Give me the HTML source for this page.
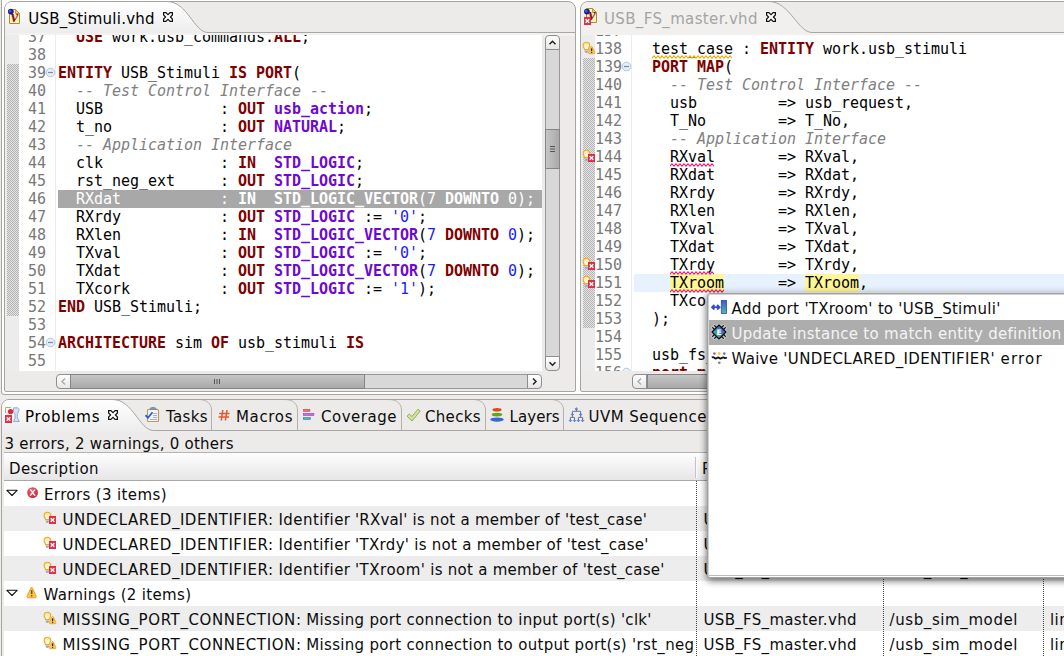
<!DOCTYPE html>
<html>
<head>
<meta charset="utf-8">
<title>Eclipse quick fix</title>
<style>
html,body{margin:0;padding:0;}
body{width:1064px;height:656px;overflow:hidden;background:#edeceb;position:relative;font-family:"DejaVu Sans","Liberation Sans",sans-serif;font-size:15px;color:#1a1a1a;}
.abs{position:absolute;}
.ui{position:absolute;font-family:"DejaVu Sans","Liberation Sans",sans-serif;font-size:15px;line-height:20px;height:20px;white-space:pre;color:#0c0c0c;}
.code{font-family:"DejaVu Sans Mono","Liberation Mono",monospace;font-size:15px;line-height:18px;color:#000;letter-spacing:-0.031px;}
.code div{height:18px;white-space:pre;}
.k{color:#800000;font-weight:bold;}
.t{color:#6e08d2;font-weight:bold;}
.c{color:#808080;font-style:italic;}
.n{color:#1a1aff;}
.b{font-weight:bold;}
.ln{font-family:"DejaVu Sans Mono","Liberation Mono",monospace;font-size:15px;line-height:18px;color:#787878;text-align:right;letter-spacing:-0.031px;}
.ln div{height:18px;}
.hatch{background-image:repeating-conic-gradient(#b4b4b4 0% 25%, #e4e4e4 0% 50%);background-size:2px 2px;}
.hl{background:#fff697;}
.sbtn{position:absolute;box-sizing:border-box;border:1px solid #8e8e8e;background:linear-gradient(#ffffff,#e6e6e6);}
.strack{position:absolute;box-sizing:border-box;border:1px solid #999;background:#d8d8d8;}
.sthumb{position:absolute;box-sizing:border-box;border:1px solid #858585;}
.g{background:#ededed;}
</style>
</head>
<body>
<svg width="0" height="0" style="position:absolute;left:0;top:0"><defs><radialGradient id="eg" cx="0.4" cy="0.3" r="0.8"><stop offset="0" stop-color="#f06070"/><stop offset="1" stop-color="#d01c30"/></radialGradient><radialGradient id="bg" cx="0.5" cy="0.75" r="0.7"><stop offset="0" stop-color="#ffffff"/><stop offset="1" stop-color="#fbe08a"/></radialGradient><linearGradient id="apg" x1="0" y1="0" x2="0" y2="1"><stop offset="0" stop-color="#3858d8"/><stop offset="1" stop-color="#58b8a0"/></linearGradient><linearGradient id="upg" x1="1" y1="0" x2="0" y2="1"><stop offset="0.2" stop-color="#3a58cc"/><stop offset="0.8" stop-color="#48b4b4"/></linearGradient><linearGradient id="tg" x1="0" y1="0" x2="0" y2="1"><stop offset="0" stop-color="#ffffff"/><stop offset="1" stop-color="#ebebeb"/></linearGradient></defs></svg>
<div class="abs" style="left:1px;top:-3px;width:1080px;height:398px;border:1px solid #a8a4a0;border-radius:3px;box-sizing:border-box;background:#fff;"></div>
<!-- LEFT EDITOR -->
<div class="abs" style="left:4px;top:1px;width:572px;height:391px;border:1px solid #a8a4a0;border-radius:8px 8px 2px 2px;background:#ecebea;box-sizing:border-box;overflow:hidden;"><svg class="abs" style="left:0;top:0" width="572" height="34" viewBox="0 0 572 34"><path d="M0 0H162C182.5 -0.5 189 31 203 31H572V34H0Z" fill="url(#tg)"/><path d="M162 -0.5C182.5 -0.5 189 30.5 203 30.5H572" fill="none" stroke="#aaa6a2" stroke-width="1"/><rect x="0" y="31" width="572" height="3" fill="#f2f1f0"/></svg></div><svg class="abs" style="left:8px;top:8px;" width="14" height="17" viewBox="0 0 14 17"><path d="M1.5 1.5H7.5L11.5 5.5V15.5H1.5Z" fill="#fdf1c3" stroke="#b48a2c" stroke-width="1"/><path d="M7.5 1.5V5.5H11.5Z" fill="#e9c878" stroke="#b48a2c" stroke-width="0.8"/><text x="6.5" y="14.2" font-family="Liberation Serif,serif" font-style="italic" font-weight="bold" font-size="16" fill="#8c1414" text-anchor="middle">v</text><circle cx="2.8" cy="3.6" r="2.9" fill="#141c8c"/><circle cx="2.1" cy="3.2" r="1.4" fill="#5870c0" opacity="0.75"/></svg><div class="ui" style="left:28.3px;top:8.5px;color:#000;letter-spacing:0.229px;">USB_Stimuli.vhd</div><svg class="abs" style="left:163px;top:12px;" width="10" height="10" viewBox="0 0 10 10"><path d="M0.6 0.6H2.9L5 2.6L7.1 0.6H9.4V2.9L7.4 5L9.4 7.1V9.4H7.1L5 7.4L2.9 9.4H0.6V7.1L2.6 5L0.6 2.9Z" fill="#fff" stroke="#111" stroke-width="1.2" stroke-linejoin="miter"/></svg><div class="abs" style="left:5px;top:35px;width:537px;height:336px;background:#fff;overflow:hidden;"><div class="abs" style="left:0;top:0;width:14px;height:336px;background:#ececec;"></div><div class="abs hatch" style="left:2px;top:29px;width:12px;height:252px;"></div><div class="abs ln" style="left:13px;top:-7px;width:28px;"><div>37</div><div>38</div><div>39</div><div>40</div><div>41</div><div>42</div><div>43</div><div>44</div><div>45</div><div>46</div><div>47</div><div>48</div><div>49</div><div>50</div><div>51</div><div>52</div><div>53</div><div>54</div><div>55</div></div><div class="abs" style="left:50px;top:0;width:1px;height:336px;background:#ececec;"></div><div class="abs" style="left:53px;top:155px;width:484px;height:18px;background:#a8a8a8;"></div><div class="abs code" style="left:53px;top:-7px;"><div>  <span class="k">USE</span> work.usb_commands.<span class="k">ALL</span>;</div><div> </div><div><span class="k">ENTITY</span> USB_Stimuli <span class="k">IS</span> <span class="k">PORT</span>(</div><div>  <span class="c">-- Test Control Interface --</span></div><div>  USB             : <span class="k">OUT</span> <span class="t">usb_action</span>;</div><div>  t_no            : <span class="k">OUT</span> <span class="t">NATURAL</span>;</div><div>  <span class="c">-- Application Interface</span></div><div>  clk             : <span class="k">IN</span>  <span class="t">STD_LOGIC</span>;</div><div>  rst_neg_ext     : <span class="k">OUT</span> <span class="t">STD_LOGIC</span>;</div><div style="color:#fff">  RXdat           : <span class="b">IN</span>  <span class="b">STD_LOGIC_VECTOR</span>(7 <span class="b">DOWNTO</span> 0);</div><div>  RXrdy           : <span class="k">OUT</span> <span class="t">STD_LOGIC</span> := <span class="n">'0'</span>;</div><div>  RXlen           : <span class="k">IN</span>  <span class="t">STD_LOGIC_VECTOR</span>(<span class="n">7</span> <span class="k">DOWNTO</span> <span class="n">0</span>);</div><div>  TXval           : <span class="k">OUT</span> <span class="t">STD_LOGIC</span> := <span class="n">'0'</span>;</div><div>  TXdat           : <span class="k">OUT</span> <span class="t">STD_LOGIC_VECTOR</span>(<span class="n">7</span> <span class="k">DOWNTO</span> <span class="n">0</span>);</div><div>  TXcork          : <span class="k">OUT</span> <span class="t">STD_LOGIC</span> := <span class="n">'1'</span>);</div><div><span class="k">END</span> USB_Stimuli;</div><div> </div><div><span class="k">ARCHITECTURE</span> sim <span class="k">OF</span> usb_stimuli <span class="k">IS</span></div><div> </div></div><svg class="abs" style="left:39.5px;top:31.5px" width="11" height="11" viewBox="0 0 11 11"><circle cx="5.5" cy="5.5" r="4.3" fill="#e6eef7" stroke="#b4c6dc" stroke-width="1"/><path d="M3 5.5h5" stroke="#6f8fb8" stroke-width="1.2"/></svg><svg class="abs" style="left:39.5px;top:301.5px" width="11" height="11" viewBox="0 0 11 11"><circle cx="5.5" cy="5.5" r="4.3" fill="#e6eef7" stroke="#b4c6dc" stroke-width="1"/><path d="M3 5.5h5" stroke="#6f8fb8" stroke-width="1.2"/></svg></div><div class="abs" style="left:545px;top:35px;width:15px;height:336px;"><div class="strack" style="left:0;top:7px;width:15px;height:322px;"></div><div class="sbtn" style="left:0;top:0;width:15px;height:15px;border-radius:4px 4px 0 0;"></div><svg class="abs" style="left:0;top:0" width="15" height="15"><path d="M4.5 9.2L7.5 6.2L10.5 9.2" fill="none" stroke="#222" stroke-width="1.5"/></svg><div class="sbtn" style="left:0;top:321px;width:15px;height:15px;border-radius:0 0 4px 4px;"></div><svg class="abs" style="left:0;top:321px" width="15" height="15"><path d="M4.5 6.2L7.5 9.2L10.5 6.2" fill="none" stroke="#222" stroke-width="1.5"/></svg><div class="sthumb" style="left:0;top:94px;width:15px;height:40px;background:linear-gradient(90deg,#c6c6c6,#a9a9a9);"></div><svg class="abs" style="left:0;top:110.0px" width="15" height="8"><path d="M5 1.5h5M5 4h5M5 6.5h5" stroke="#555" stroke-width="1"/></svg></div><div class="abs" style="left:56px;top:374px;width:486px;height:15px;"><div class="strack" style="left:7px;top:0;width:472px;height:15px;"></div><div class="sbtn" style="left:0;top:0;width:15px;height:15px;border-radius:4px 0 0 4px;"></div><svg class="abs" style="left:0;top:0" width="15" height="15"><path d="M9 4.5L6 7.5L9 10.5" fill="none" stroke="#aaa" stroke-width="1.4"/></svg><div class="sbtn" style="left:471px;top:0;width:15px;height:15px;border-radius:0 4px 4px 0;"></div><svg class="abs" style="left:471px;top:0" width="15" height="15"><path d="M6 4.5L9 7.5L6 10.5" fill="none" stroke="#222" stroke-width="1.5"/></svg><div class="sthumb" style="left:14px;top:0;width:294.5px;height:15px;background:linear-gradient(#c6c6c6,#a9a9a9);"></div><svg class="abs" style="left:157.25px;top:0" width="8" height="15"><path d="M1.5 5v5M4 5v5M6.5 5v5" stroke="#555" stroke-width="1"/></svg></div>
<!-- RIGHT EDITOR -->
<div class="abs" style="left:580px;top:1px;width:500px;height:391px;border:1px solid #a8a4a0;border-radius:8px 0 0 2px;background:#ecebea;box-sizing:border-box;overflow:hidden;"><svg class="abs" style="left:0;top:0" width="500" height="34" viewBox="0 0 500 34"><path d="M0 0H188C208.5 -0.5 217 31 231 31H500V34H0Z" fill="#f1f0ef"/><path d="M188 -0.5C208.5 -0.5 217 30.5 231 30.5H500" fill="none" stroke="#aaa6a2" stroke-width="1"/><rect x="0" y="31" width="500" height="3" fill="#f2f1f0"/></svg></div><svg class="abs" style="left:584px;top:7px;" width="14" height="19" viewBox="0 0 14 19"><path d="M2.5 1.5H8.5L12.5 5.5V15.5H2.5Z" fill="#fdf1c3" stroke="#b48a2c" stroke-width="1"/><path d="M8.5 1.5V5.5H12.5Z" fill="#e9c878" stroke="#b48a2c" stroke-width="0.8"/><text x="8" y="13.2" font-family="Liberation Serif,serif" font-style="italic" font-weight="bold" font-size="16" fill="#8c1414" text-anchor="middle">v</text><circle cx="2.9" cy="4.6" r="2.9" fill="#141c8c"/><circle cx="2.2" cy="4.2" r="1.4" fill="#5870c0" opacity="0.75"/><rect x="-0.2" y="10" width="7.2" height="8" fill="#dc3048"/><path d="M1.5999999999999999 12.2L5.2 15.8M5.2 12.2L1.5999999999999999 15.8" stroke="#fff" stroke-width="1.4"/></svg><div class="ui" style="left:604px;top:8.5px;color:#a4a4a4;letter-spacing:0.352px;">USB_FS_master.vhd</div><svg class="abs" style="left:765.5px;top:12px;" width="10" height="10" viewBox="0 0 10 10"><path d="M0.6 0.6H2.9L5 2.6L7.1 0.6H9.4V2.9L7.4 5L9.4 7.1V9.4H7.1L5 7.4L2.9 9.4H0.6V7.1L2.6 5L0.6 2.9Z" fill="#fff" stroke="#111" stroke-width="1.2" stroke-linejoin="miter"/></svg><div class="abs" style="left:581px;top:35px;width:483px;height:336px;background:#fff;overflow:hidden;"><div class="abs" style="left:0;top:0;width:14px;height:336px;background:#ececec;"></div><div class="abs hatch" style="left:2px;top:23px;width:12px;height:270px;"></div><div class="abs ln" style="left:14px;top:-13px;width:27px;"><div>137</div><div>138</div><div>139</div><div>140</div><div>141</div><div>142</div><div>143</div><div>144</div><div>145</div><div>146</div><div>147</div><div>148</div><div>149</div><div>150</div><div>151</div><div>152</div><div>153</div><div>154</div><div>155</div><div>156</div></div><div class="abs" style="left:50px;top:0;width:1px;height:336px;background:#ececec;"></div><div class="abs" style="left:53px;top:239px;width:430px;height:18px;background:#e8f2fe;"></div><div class="abs code" style="left:53px;top:-13px;"><div> </div><div>  test_case : <span class="k">ENTITY</span> work.usb_stimuli</div><div>  <span class="k">PORT</span> <span class="k">MAP</span>(</div><div>    <span class="c">-- Test Control Interface --</span></div><div>    usb         =&gt; usb_request,</div><div>    T_No        =&gt; T_No,</div><div>    <span class="c">-- Application Interface</span></div><div>    RXval       =&gt; RXval,</div><div>    RXdat       =&gt; RXdat,</div><div>    RXrdy       =&gt; RXrdy,</div><div>    RXlen       =&gt; RXlen,</div><div>    TXval       =&gt; TXval,</div><div>    TXdat       =&gt; TXdat,</div><div>    TXrdy       =&gt; TXrdy,</div><div>    <span class="hl">TXroom</span>      =&gt; <span class="hl">TXroom</span>,</div><div>    TXcork      =&gt; TXcork</div><div>  );</div><div> </div><div>  usb_fs_master : <span class="k">ENTITY</span> work.usb_fs_master</div><div>  <span class="k">port</span> <span class="k">map</span>(</div></div><svg class="abs" style="left:40.0px;top:25.5px" width="11" height="11" viewBox="0 0 11 11"><circle cx="5.5" cy="5.5" r="4.3" fill="#e6eef7" stroke="#b4c6dc" stroke-width="1"/><path d="M3 5.5h5" stroke="#6f8fb8" stroke-width="1.2"/></svg><svg class="abs" style="left:40.0px;top:331.5px" width="11" height="11" viewBox="0 0 11 11"><circle cx="5.5" cy="5.5" r="4.3" fill="#e6eef7" stroke="#b4c6dc" stroke-width="1"/><path d="M3 5.5h5" stroke="#6f8fb8" stroke-width="1.2"/></svg><svg class="abs" style="left:1px;top:5.7px;" width="14" height="14" viewBox="0 0 14 14"><path d="M2.6 8.6H6.2V10.6C6.2 12.2 2.6 12.2 2.6 10.6Z" fill="#c4d0de"/><path d="M2.8 10.4C3.4 12 5.4 12 6 10.4Z" fill="#6a86ac"/><path d="M4.4 1.2C6.4 1.2 7.7 2.6 7.7 4.4C7.7 6 6.6 6.8 6.2 8.6H2.6C2.2 6.8 1.1 6 1.1 4.4C1.1 2.6 2.4 1.2 4.4 1.2Z" fill="url(#bg)" stroke="#f0aa28" stroke-width="1.1"/><path d="M9 5.9C9.3 5.3 9.9 5.3 10.2 5.9L12.8 11.4C13.1 12.2 12.7 12.7 12 12.7H7.2C6.5 12.7 6.1 12.2 6.4 11.4Z" fill="#fad060" stroke="#e8a020" stroke-width="0.9" stroke-linejoin="round"/><path d="M9.6 7.4V10" stroke="#3a2408" stroke-width="1.3"/><rect x="8.95" y="10.7" width="1.3" height="1.2" fill="#3a2408"/></svg><svg class="abs" style="left:1px;top:113.7px;" width="14" height="14" viewBox="0 0 14 14"><path d="M2.6 8.6H6.2V10.6C6.2 12.2 2.6 12.2 2.6 10.6Z" fill="#c4d0de"/><path d="M2.8 10.4C3.4 12 5.4 12 6 10.4Z" fill="#6a86ac"/><path d="M4.4 1.2C6.4 1.2 7.7 2.6 7.7 4.4C7.7 6 6.6 6.8 6.2 8.6H2.6C2.2 6.8 1.1 6 1.1 4.4C1.1 2.6 2.4 1.2 4.4 1.2Z" fill="url(#bg)" stroke="#f0aa28" stroke-width="1.1"/><rect x="6" y="5" width="7" height="8" fill="#dc3048"/><path d="M7.7 7.2L11.3 10.8M11.3 7.2L7.7 10.8" stroke="#fff" stroke-width="1.4"/></svg><svg class="abs" style="left:1px;top:221.7px;" width="14" height="14" viewBox="0 0 14 14"><path d="M2.6 8.6H6.2V10.6C6.2 12.2 2.6 12.2 2.6 10.6Z" fill="#c4d0de"/><path d="M2.8 10.4C3.4 12 5.4 12 6 10.4Z" fill="#6a86ac"/><path d="M4.4 1.2C6.4 1.2 7.7 2.6 7.7 4.4C7.7 6 6.6 6.8 6.2 8.6H2.6C2.2 6.8 1.1 6 1.1 4.4C1.1 2.6 2.4 1.2 4.4 1.2Z" fill="url(#bg)" stroke="#f0aa28" stroke-width="1.1"/><rect x="6" y="5" width="7" height="8" fill="#dc3048"/><path d="M7.7 7.2L11.3 10.8M11.3 7.2L7.7 10.8" stroke="#fff" stroke-width="1.4"/></svg><svg class="abs" style="left:1px;top:239.7px;" width="14" height="14" viewBox="0 0 14 14"><path d="M2.6 8.6H6.2V10.6C6.2 12.2 2.6 12.2 2.6 10.6Z" fill="#c4d0de"/><path d="M2.8 10.4C3.4 12 5.4 12 6 10.4Z" fill="#6a86ac"/><path d="M4.4 1.2C6.4 1.2 7.7 2.6 7.7 4.4C7.7 6 6.6 6.8 6.2 8.6H2.6C2.2 6.8 1.1 6 1.1 4.4C1.1 2.6 2.4 1.2 4.4 1.2Z" fill="url(#bg)" stroke="#f0aa28" stroke-width="1.1"/><rect x="6" y="5" width="7" height="8" fill="#dc3048"/><path d="M7.7 7.2L11.3 10.8M11.3 7.2L7.7 10.8" stroke="#fff" stroke-width="1.4"/></svg><svg class="abs" style="left:71px;top:19.7px" width="81" height="4" viewBox="0 0 81 4"><path d="M0 3.15L2 0.85L4 3.15L6 0.85L8 3.15L10 0.85L12 3.15L14 0.85L16 3.15L18 0.85L20 3.15L22 0.85L24 3.15L26 0.85L28 3.15L30 0.85L32 3.15L34 0.85L36 3.15L38 0.85L40 3.15L42 0.85L44 3.15L46 0.85L48 3.15L50 0.85L52 3.15L54 0.85L56 3.15L58 0.85L60 3.15L62 0.85L64 3.15L66 0.85L68 3.15L70 0.85L72 3.15L74 0.85L76 3.15L78 0.85L80 3.15" fill="none" stroke="#e6b000" stroke-width="1.1"/></svg><svg class="abs" style="left:89px;top:127.69999999999999px" width="45" height="4" viewBox="0 0 45 4"><path d="M0 3.15L2 0.85L4 3.15L6 0.85L8 3.15L10 0.85L12 3.15L14 0.85L16 3.15L18 0.85L20 3.15L22 0.85L24 3.15L26 0.85L28 3.15L30 0.85L32 3.15L34 0.85L36 3.15L38 0.85L40 3.15L42 0.85L44 3.15" fill="none" stroke="#ee1c7c" stroke-width="1.1"/></svg><svg class="abs" style="left:89px;top:235.7px" width="45" height="4" viewBox="0 0 45 4"><path d="M0 3.15L2 0.85L4 3.15L6 0.85L8 3.15L10 0.85L12 3.15L14 0.85L16 3.15L18 0.85L20 3.15L22 0.85L24 3.15L26 0.85L28 3.15L30 0.85L32 3.15L34 0.85L36 3.15L38 0.85L40 3.15L42 0.85L44 3.15" fill="none" stroke="#ee1c7c" stroke-width="1.1"/></svg><svg class="abs" style="left:89px;top:253.7px" width="54" height="4" viewBox="0 0 54 4"><path d="M0 3.15L2 0.85L4 3.15L6 0.85L8 3.15L10 0.85L12 3.15L14 0.85L16 3.15L18 0.85L20 3.15L22 0.85L24 3.15L26 0.85L28 3.15L30 0.85L32 3.15L34 0.85L36 3.15L38 0.85L40 3.15L42 0.85L44 3.15L46 0.85L48 3.15L50 0.85L52 3.15L54 0.85" fill="none" stroke="#ee1c7c" stroke-width="1.1"/></svg></div><div class="abs" style="left:632px;top:374px;width:568px;height:15px;"><div class="strack" style="left:7px;top:0;width:554px;height:15px;"></div><div class="sbtn" style="left:0;top:0;width:15px;height:15px;border-radius:4px 0 0 4px;"></div><svg class="abs" style="left:0;top:0" width="15" height="15"><path d="M9 4.5L6 7.5L9 10.5" fill="none" stroke="#aaa" stroke-width="1.4"/></svg><div class="sbtn" style="left:553px;top:0;width:15px;height:15px;border-radius:0 4px 4px 0;"></div><svg class="abs" style="left:553px;top:0" width="15" height="15"><path d="M6 4.5L9 7.5L6 10.5" fill="none" stroke="#222" stroke-width="1.5"/></svg><div class="sthumb" style="left:15px;top:0;width:503px;height:15px;background:linear-gradient(#c6c6c6,#a9a9a9);"></div><svg class="abs" style="left:262.5px;top:0" width="8" height="15"><path d="M1.5 5v5M4 5v5M6.5 5v5" stroke="#555" stroke-width="1"/></svg></div>
<!-- BOTTOM PANEL -->
<div class="abs" style="left:1px;top:399px;width:1080px;height:270px;border:1px solid #a8a4a0;border-radius:8px 0 0 0;background:#ecebea;box-sizing:border-box;overflow:hidden;"><svg class="abs" style="left:0;top:0" width="1064" height="34" viewBox="0 0 1064 34"><path d="M0 0H110.5C131.0 -0.5 137.5 31 151.5 31H1064V34H0Z" fill="url(#tg)"/><path d="M110.5 -0.5C131.0 -0.5 137.5 30.5 151.5 30.5H1064" fill="none" stroke="#aaa6a2" stroke-width="1"/><path d="M197 -0.5C205 -0.5 209.5 4 209.5 10V30.5" fill="none" stroke="#b4b0ac" stroke-width="1"/><path d="M283 -0.5C291 -0.5 295.5 4 295.5 10V30.5" fill="none" stroke="#b4b0ac" stroke-width="1"/><path d="M387 -0.5C395 -0.5 399.5 4 399.5 10V30.5" fill="none" stroke="#b4b0ac" stroke-width="1"/><path d="M471 -0.5C479 -0.5 483.5 4 483.5 10V30.5" fill="none" stroke="#b4b0ac" stroke-width="1"/><path d="M549 -0.5C557 -0.5 561.5 4 561.5 10V30.5" fill="none" stroke="#b4b0ac" stroke-width="1"/></svg></div><svg class="abs" style="left:5px;top:407px;" width="15" height="17" viewBox="0 0 15 17"><path d="M0.5 6V0.5H6" fill="none" stroke="#b8b070" stroke-width="1"/><circle cx="5.6" cy="4.6" r="2.7" fill="#e02838"/><path d="M8.5 0.8H12.5C14.2 0.8 14.4 3.5 13.2 5.2C12.2 6.6 12 9 12.6 11.5L14.3 14.5H8.5L10 11.5V6.5L8.5 5.2Z" fill="#d4e2f6" stroke="#8da4cc" stroke-width="0.9"/><rect x="0" y="8" width="7" height="8" fill="#dc3048"/><path d="M1.7 10.2L5.3 13.8M5.3 10.2L1.7 13.8" stroke="#fff" stroke-width="1.4"/></svg><div class="ui" style="left:25px;top:407.0px;color:#000;letter-spacing:0.766px;">Problems</div><svg class="abs" style="left:107.5px;top:410px;" width="10" height="10" viewBox="0 0 10 10"><path d="M0.6 0.6H2.9L5 2.6L7.1 0.6H9.4V2.9L7.4 5L9.4 7.1V9.4H7.1L5 7.4L2.9 9.4H0.6V7.1L2.6 5L0.6 2.9Z" fill="#fff" stroke="#111" stroke-width="1.2" stroke-linejoin="miter"/></svg><svg class="abs" style="left:145px;top:407px;" width="15" height="16" viewBox="0 0 15 16"><rect x="2.5" y="2.5" width="11" height="12" rx="1" fill="#f4f4f8" stroke="#c09a58" stroke-width="1.2"/><path d="M5 2.5V1H6.5L7 0H9L9.5 1H11V2.5Z" fill="#8898b8" stroke="#7080a0" stroke-width="0.6"/><path d="M8 6.5h4M8 8.5h4M8 10.5h4M5 12.5h7" stroke="#9aa8c8" stroke-width="0.9"/><path d="M0.5 8.2L3 10.8L7.5 5.2" fill="none" stroke="#1c5cd0" stroke-width="1.7"/></svg><div class="ui" style="left:166px;top:407.0px;letter-spacing:0.324px;">Tasks</div><svg class="abs" style="left:218px;top:409px;" width="13" height="13" viewBox="0 0 13 13"><path d="M4.8 1L3.2 11.5M9 1L7.4 11.5M1.2 4.4H11.6M0.6 8.1H11" stroke="#e05a2c" stroke-width="1.5" fill="none"/></svg><div class="ui" style="left:236px;top:407.0px;letter-spacing:0.656px;">Macros</div><svg class="abs" style="left:303px;top:408px;" width="12" height="13" viewBox="0 0 12 13"><rect x="0.3" y="1.3" width="6.6" height="2" fill="#ee6878" stroke="#c84858" stroke-width="0.6"/><rect x="0.3" y="5.3" width="10.6" height="2.2" fill="#c070d8" stroke="#9848b0" stroke-width="0.6"/><rect x="0.3" y="9.5" width="7.2" height="2" fill="#50b0c8" stroke="#3088a8" stroke-width="0.6"/></svg><div class="ui" style="left:321px;top:407.0px;letter-spacing:0.518px;">Coverage</div><svg class="abs" style="left:406px;top:408px;" width="15" height="14" viewBox="0 0 15 14"><path d="M1 8.2L3.4 6L5.8 8.6L12 1.2L14.3 3L6 13Z" fill="#d2e2a0" stroke="#94b050" stroke-width="1" stroke-linejoin="round"/></svg><div class="ui" style="left:425px;top:407.0px;letter-spacing:0.306px;">Checks</div><svg class="abs" style="left:490px;top:408px;" width="14" height="14" viewBox="0 0 14 14"><ellipse cx="7" cy="1.8" rx="4.6" ry="1.8" fill="#e04818"/><ellipse cx="7" cy="6.6" rx="5.3" ry="1.9" fill="#5ca820"/><ellipse cx="7" cy="11.6" rx="6.8" ry="2.1" fill="#3a66d0"/></svg><div class="ui" style="left:509.5px;top:407.0px;letter-spacing:0.072px;">Layers</div><svg class="abs" style="left:568px;top:407px;" width="17" height="16" viewBox="0 0 17 16"><path d="M8.4 2V4.3M4.4 7V4.3H12.6V7M4.4 8V10.4M12.6 8V10.4M2.4 13V10.4H6.5V13M10.4 13V10.4H14.6V13" stroke="#6c7688" stroke-width="1" fill="none"/><path d="M8.4 0.75L9.55 1.9L8.4 3.05L7.25 1.9Z" fill="#48a0c8" stroke="#4460d8" stroke-width="0.8"/><path d="M4.4 6.35L5.550000000000001 7.5L4.4 8.65L3.2500000000000004 7.5Z" fill="#48a0c8" stroke="#4460d8" stroke-width="0.8"/><path d="M12.6 6.35L13.75 7.5L12.6 8.65L11.45 7.5Z" fill="#48a0c8" stroke="#4460d8" stroke-width="0.8"/><path d="M2.4 12.45L3.55 13.6L2.4 14.75L1.25 13.6Z" fill="#48a0c8" stroke="#4460d8" stroke-width="0.8"/><path d="M6.5 12.45L7.65 13.6L6.5 14.75L5.35 13.6Z" fill="#48a0c8" stroke="#4460d8" stroke-width="0.8"/><path d="M10.4 12.45L11.55 13.6L10.4 14.75L9.25 13.6Z" fill="#48a0c8" stroke="#4460d8" stroke-width="0.8"/><path d="M14.6 12.45L15.75 13.6L14.6 14.75L13.45 13.6Z" fill="#48a0c8" stroke="#4460d8" stroke-width="0.8"/></svg><div class="ui" style="left:588.5px;top:407.0px;letter-spacing:0.45px;">UVM Sequence</div><div class="ui" style="left:4.5px;top:434.0px;letter-spacing:0.248px;">3 errors, 2 warnings, 0 others</div><div class="abs" style="left:4px;top:452px;width:1060px;height:204px;background:#fff;"></div><div class="abs" style="left:4px;top:452px;width:1060px;height:29px;background:linear-gradient(#fefefe,#e6e6e6);border-top:1px solid #b4b4b4;border-bottom:1px solid #a8a8a8;box-sizing:border-box;"></div><div class="ui" style="left:9px;top:459.0px;letter-spacing:0.406px;">Description</div><div class="ui" style="left:702px;top:459.0px;letter-spacing:0.3px;">Resource</div><div class="abs g" style="left:4px;top:506px;width:1060px;height:25px;"></div><div class="abs g" style="left:4px;top:556px;width:1060px;height:25px;"></div><div class="abs g" style="left:4px;top:606px;width:1060px;height:25px;"></div><div class="abs" style="left:695px;top:457px;width:1px;height:21px;background:#c4c4c4;border-right:1px solid #fafafa;"></div><div class="abs" style="left:696px;top:481px;width:0;height:175px;border-left:1px dotted #444;"></div><div class="abs" style="left:882px;top:457px;width:1px;height:21px;background:#c4c4c4;border-right:1px solid #fafafa;"></div><div class="abs" style="left:883px;top:481px;width:0;height:175px;border-left:1px dotted #444;"></div><div class="abs" style="left:1042px;top:457px;width:1px;height:21px;background:#c4c4c4;border-right:1px solid #fafafa;"></div><div class="abs" style="left:1043px;top:481px;width:0;height:175px;border-left:1px dotted #444;"></div><svg class="abs" style="left:4.699999999999999px;top:489px;" width="14" height="8" viewBox="0 0 14 8"><path d="M1.9 1.3H12.1L7 6.5Z" fill="#fff" stroke="#111" stroke-width="1.1" stroke-linejoin="round"/></svg><svg class="abs" style="left:27.4px;top:487px;" width="12" height="12" viewBox="0 0 12 12"><circle cx="5.6" cy="5.6" r="5.4" fill="url(#eg)"/><path d="M3.6 2.9C5 3.6 6 7 7.8 8.3M7.6 2.9C6.4 3.8 4.8 7.4 3.4 8.3" stroke="#fff" stroke-width="1.3" fill="none" stroke-linecap="round"/></svg><div class="ui" style="left:44px;top:485.0px;letter-spacing:0.375px;">Errors (3 items)</div><svg class="abs" style="left:43px;top:510.7px;" width="14" height="14" viewBox="0 0 14 14"><path d="M2.6 8.6H6.2V10.6C6.2 12.2 2.6 12.2 2.6 10.6Z" fill="#c4d0de"/><path d="M2.8 10.4C3.4 12 5.4 12 6 10.4Z" fill="#6a86ac"/><path d="M4.4 1.2C6.4 1.2 7.7 2.6 7.7 4.4C7.7 6 6.6 6.8 6.2 8.6H2.6C2.2 6.8 1.1 6 1.1 4.4C1.1 2.6 2.4 1.2 4.4 1.2Z" fill="url(#bg)" stroke="#f0aa28" stroke-width="1.1"/><rect x="6" y="5" width="7" height="8" fill="#dc3048"/><path d="M7.7 7.2L11.3 10.8M11.3 7.2L7.7 10.8" stroke="#fff" stroke-width="1.4"/></svg><div class="ui" style="left:62.5px;top:510.0px;letter-spacing:0.528px;">UNDECLARED_IDENTIFIER:</div><div class="ui" style="left:278.5px;top:510.0px;letter-spacing:0.436px;">Identifier</div><div class="ui" style="left:355px;top:510.0px;letter-spacing:0.185px;">'RXval'</div><div class="ui" style="left:412.6px;top:510.0px;letter-spacing:0.256px;">is not a member of</div><div class="ui" style="left:565.0px;top:510.0px;letter-spacing:0.275px;">'test_case'</div><div class="ui" style="left:703.5px;top:510.0px;letter-spacing:0.32px;">USB_FS_master.vhd</div><div class="ui" style="left:889.5px;top:510.0px;letter-spacing:0.6px;">/usb_sim_model</div><div class="ui" style="left:1050px;top:510.0px;letter-spacing:0.4px;">line</div><svg class="abs" style="left:43px;top:535.7px;" width="14" height="14" viewBox="0 0 14 14"><path d="M2.6 8.6H6.2V10.6C6.2 12.2 2.6 12.2 2.6 10.6Z" fill="#c4d0de"/><path d="M2.8 10.4C3.4 12 5.4 12 6 10.4Z" fill="#6a86ac"/><path d="M4.4 1.2C6.4 1.2 7.7 2.6 7.7 4.4C7.7 6 6.6 6.8 6.2 8.6H2.6C2.2 6.8 1.1 6 1.1 4.4C1.1 2.6 2.4 1.2 4.4 1.2Z" fill="url(#bg)" stroke="#f0aa28" stroke-width="1.1"/><rect x="6" y="5" width="7" height="8" fill="#dc3048"/><path d="M7.7 7.2L11.3 10.8M11.3 7.2L7.7 10.8" stroke="#fff" stroke-width="1.4"/></svg><div class="ui" style="left:62.5px;top:535.0px;letter-spacing:0.528px;">UNDECLARED_IDENTIFIER:</div><div class="ui" style="left:278.5px;top:535.0px;letter-spacing:0.436px;">Identifier</div><div class="ui" style="left:355px;top:535.0px;letter-spacing:0.333px;">'TXrdy'</div><div class="ui" style="left:414.3px;top:535.0px;letter-spacing:0.256px;">is not a member of</div><div class="ui" style="left:566.7px;top:535.0px;letter-spacing:0.275px;">'test_case'</div><div class="ui" style="left:703.5px;top:535.0px;letter-spacing:0.32px;">USB_FS_master.vhd</div><div class="ui" style="left:889.5px;top:535.0px;letter-spacing:0.6px;">/usb_sim_model</div><div class="ui" style="left:1050px;top:535.0px;letter-spacing:0.4px;">line</div><svg class="abs" style="left:43px;top:560.7px;" width="14" height="14" viewBox="0 0 14 14"><path d="M2.6 8.6H6.2V10.6C6.2 12.2 2.6 12.2 2.6 10.6Z" fill="#c4d0de"/><path d="M2.8 10.4C3.4 12 5.4 12 6 10.4Z" fill="#6a86ac"/><path d="M4.4 1.2C6.4 1.2 7.7 2.6 7.7 4.4C7.7 6 6.6 6.8 6.2 8.6H2.6C2.2 6.8 1.1 6 1.1 4.4C1.1 2.6 2.4 1.2 4.4 1.2Z" fill="url(#bg)" stroke="#f0aa28" stroke-width="1.1"/><rect x="6" y="5" width="7" height="8" fill="#dc3048"/><path d="M7.7 7.2L11.3 10.8M11.3 7.2L7.7 10.8" stroke="#fff" stroke-width="1.4"/></svg><div class="ui" style="left:62.5px;top:560.0px;letter-spacing:0.528px;">UNDECLARED_IDENTIFIER:</div><div class="ui" style="left:278.5px;top:560.0px;letter-spacing:0.436px;">Identifier</div><div class="ui" style="left:355px;top:560.0px;letter-spacing:0.5px;">'TXroom'</div><div class="ui" style="left:430.3px;top:560.0px;letter-spacing:0.256px;">is not a member of</div><div class="ui" style="left:582.7px;top:560.0px;letter-spacing:0.275px;">'test_case'</div><div class="ui" style="left:703.5px;top:560.0px;letter-spacing:0.32px;">USB_FS_master.vhd</div><div class="ui" style="left:889.5px;top:560.0px;letter-spacing:0.6px;">/usb_sim_model</div><div class="ui" style="left:1050px;top:560.0px;letter-spacing:0.4px;">line</div><svg class="abs" style="left:4.699999999999999px;top:589px;" width="14" height="8" viewBox="0 0 14 8"><path d="M1.9 1.3H12.1L7 6.5Z" fill="#fff" stroke="#111" stroke-width="1.1" stroke-linejoin="round"/></svg><svg class="abs" style="left:26.4px;top:587px;" width="12" height="12" viewBox="0 0 12 12"><path d="M5 0.8C5.4 0.2 5.9 0.2 6.3 0.8L10.2 9.2C10.6 10.2 10 10.8 9.2 10.8H2C1.2 10.8 0.6 10.2 1 9.2Z" fill="#f8c850" stroke="#e8a020" stroke-width="1" stroke-linejoin="round"/><path d="M5.65 3.2V7" stroke="#7a4a10" stroke-width="1.5"/><rect x="4.9" y="8" width="1.5" height="1.5" fill="#7a4a10"/></svg><div class="ui" style="left:43.5px;top:585.0px;letter-spacing:0.324px;">Warnings (2 items)</div><svg class="abs" style="left:43px;top:610.7px;" width="14" height="14" viewBox="0 0 14 14"><path d="M2.6 8.6H6.2V10.6C6.2 12.2 2.6 12.2 2.6 10.6Z" fill="#c4d0de"/><path d="M2.8 10.4C3.4 12 5.4 12 6 10.4Z" fill="#6a86ac"/><path d="M4.4 1.2C6.4 1.2 7.7 2.6 7.7 4.4C7.7 6 6.6 6.8 6.2 8.6H2.6C2.2 6.8 1.1 6 1.1 4.4C1.1 2.6 2.4 1.2 4.4 1.2Z" fill="url(#bg)" stroke="#f0aa28" stroke-width="1.1"/><path d="M9 5.9C9.3 5.3 9.9 5.3 10.2 5.9L12.8 11.4C13.1 12.2 12.7 12.7 12 12.7H7.2C6.5 12.7 6.1 12.2 6.4 11.4Z" fill="#fad060" stroke="#e8a020" stroke-width="0.9" stroke-linejoin="round"/><path d="M9.6 7.4V10" stroke="#3a2408" stroke-width="1.3"/><rect x="8.95" y="10.7" width="1.3" height="1.2" fill="#3a2408"/></svg><div class="ui" style="left:62.5px;top:610.0px;letter-spacing:0.614px;">MISSING_PORT_CONNECTION:</div><div class="abs" style="left:300px;top:608.5px;width:393.5px;height:24px;overflow:hidden"><div class="ui" style="left:6.3px;top:1.5px;letter-spacing:0.311px;">Missing port connection to input port(s) 'clk'</div></div><div class="ui" style="left:703.5px;top:610.0px;letter-spacing:0.32px;">USB_FS_master.vhd</div><div class="ui" style="left:889.5px;top:610.0px;letter-spacing:0.6px;">/usb_sim_model</div><div class="ui" style="left:1050px;top:610.0px;letter-spacing:0.4px;">line</div><svg class="abs" style="left:43px;top:635.7px;" width="14" height="14" viewBox="0 0 14 14"><path d="M2.6 8.6H6.2V10.6C6.2 12.2 2.6 12.2 2.6 10.6Z" fill="#c4d0de"/><path d="M2.8 10.4C3.4 12 5.4 12 6 10.4Z" fill="#6a86ac"/><path d="M4.4 1.2C6.4 1.2 7.7 2.6 7.7 4.4C7.7 6 6.6 6.8 6.2 8.6H2.6C2.2 6.8 1.1 6 1.1 4.4C1.1 2.6 2.4 1.2 4.4 1.2Z" fill="url(#bg)" stroke="#f0aa28" stroke-width="1.1"/><path d="M9 5.9C9.3 5.3 9.9 5.3 10.2 5.9L12.8 11.4C13.1 12.2 12.7 12.7 12 12.7H7.2C6.5 12.7 6.1 12.2 6.4 11.4Z" fill="#fad060" stroke="#e8a020" stroke-width="0.9" stroke-linejoin="round"/><path d="M9.6 7.4V10" stroke="#3a2408" stroke-width="1.3"/><rect x="8.95" y="10.7" width="1.3" height="1.2" fill="#3a2408"/></svg><div class="ui" style="left:62.5px;top:635.0px;letter-spacing:0.614px;">MISSING_PORT_CONNECTION:</div><div class="abs" style="left:300px;top:633.5px;width:393.5px;height:24px;overflow:hidden"><div class="ui" style="left:6.3px;top:1.5px;letter-spacing:0.311px;">Missing port connection to output port(s) 'rst_neg_ext'</div></div><div class="ui" style="left:703.5px;top:635.0px;letter-spacing:0.32px;">USB_FS_master.vhd</div><div class="ui" style="left:889.5px;top:635.0px;letter-spacing:0.6px;">/usb_sim_model</div><div class="ui" style="left:1050px;top:635.0px;letter-spacing:0.4px;">line</div>
<!-- QUICK FIX POPUP -->
<div class="abs" style="left:707px;top:293px;width:370px;height:285px;background:#fff;border:1px solid #a0a0a0;border-radius:3px;box-sizing:border-box;box-shadow:0 3px 7px rgba(0,0,0,0.4),0 1px 9px rgba(0,0,0,0.28),inset 1px 1px 0 0 #d2d2d2;"></div><div class="abs" style="left:709px;top:575px;width:355px;height:1px;background:#bababa;"></div><div class="abs" style="left:709px;top:320px;width:355px;height:25px;background:#adadad;"></div><svg class="abs" style="left:711px;top:300px;" width="16" height="14" viewBox="0 0 16 14"><rect x="10.3" y="0.5" width="5.2" height="13" fill="url(#apg)" stroke="#3048b0" stroke-width="0.8"/><path d="M1.2 7.2H8.3M3.4 4.9L1 7.2L3.4 9.5M6.1 4.9L8.5 7.2L6.1 9.5" fill="none" stroke="#2c4cd4" stroke-width="1.8"/></svg><div class="ui" style="left:731.5px;top:299.0px;letter-spacing:0.42px;">Add port</div><div class="ui" style="left:804.5px;top:299.0px;letter-spacing:0.214px;">'TXroom'</div><div class="ui" style="left:878px;top:299.0px;letter-spacing:-0.062px;">to</div><div class="ui" style="left:898.3px;top:299.0px;letter-spacing:0.286px;">'USB_Stimuli'</div><svg class="abs" style="left:711px;top:324px;" width="16" height="16" viewBox="0 0 16 16"><path d="M10.5 12.5L12.4 14.4M12.5 10.5L14.4 12.4M10.5 3.5L12.4 1.6M12.5 5.5L14.4 3.6M5.5 12.5L3.6 14.4M3.5 10.5L1.6 12.4M5.5 3.5L3.6 1.6M3.5 5.5L1.6 3.6M8 1L15 8L8 15L1 8Z" stroke="#ffffff" stroke-opacity="0.28" stroke-width="3.2" fill="none" stroke-linecap="round"/><path d="M10.5 12.5L12.4 14.4M12.5 10.5L14.4 12.4M10.5 3.5L12.4 1.6M12.5 5.5L14.4 3.6M5.5 12.5L3.6 14.4M3.5 10.5L1.6 12.4M5.5 3.5L3.6 1.6M3.5 5.5L1.6 3.6" stroke="#0a0a0a" stroke-width="1.1" stroke-linecap="round"/><path d="M8 1L15 8L8 15L1 8Z" fill="url(#upg)" stroke="#0a0a0a" stroke-width="1.1" stroke-linejoin="round"/><text x="8.1" y="10.7" font-family="DejaVu Sans,sans-serif" font-weight="bold" font-size="7.5" fill="#fff" text-anchor="middle">E</text></svg><div class="ui" style="left:731.5px;top:324.0px;color:#f4f4f4;letter-spacing:0.279px;">Update instance to match entity definition</div><svg class="abs" style="left:711px;top:352px;" width="17" height="13" viewBox="0 0 17 13"><circle cx="3.4" cy="1.6" r="1.3" fill="#e05050"/><circle cx="8.3" cy="1.6" r="1.3" fill="#e0c820"/><circle cx="13.3" cy="1.6" r="1.3" fill="#8060c8"/><path d="M0.8 5.6Q2.2 4.6 3.4 5.8T5.9 6T8.3 6T10.8 6T13.3 5.8T15.8 5.4" fill="none" stroke="#111" stroke-width="1.8"/><circle cx="8.3" cy="10.8" r="1.3" fill="#808080"/></svg><div class="ui" style="left:731.5px;top:349.0px;letter-spacing:0.289px;">Waive</div><div class="ui" style="left:783.3px;top:349.0px;letter-spacing:0.374px;">'UNDECLARED_IDENTIFIER'</div><div class="ui" style="left:1000.5px;top:349.0px;letter-spacing:1.193px;">error</div>
</body>
</html>
